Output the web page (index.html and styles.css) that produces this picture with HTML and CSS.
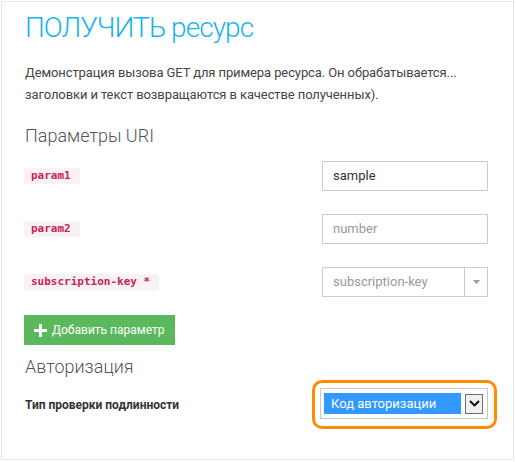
FILE: index.html
```html
<!DOCTYPE html>
<html lang="ru">
<head>
<meta charset="utf-8">
<link rel="stylesheet" href="styles.css">
</head>
<body>
<div class="frame">
  <h1 class="title">ПОЛУЧИТЬ ресурс</h1>
  <p class="desc">Демонстрация вызова GET для примера ресурса. Он обрабатывается...<br>заголовки и текст возвращаются в качестве полученных).</p>
  <h2 class="section">Параметры URI</h2>
  <div class="params">
    <div class="row">
      <code class="name">param1</code>
      <div class="field">sample</div>
    </div>
    <div class="row">
      <code class="name">param2</code>
      <div class="field placeholder">number</div>
    </div>
    <div class="row">
      <code class="name">subscription-key *</code>
      <div class="field combo">
        <span class="combo-text placeholder">subscription-key</span>
        <span class="combo-btn"><svg width="7" height="4" viewBox="0 0 7 4"><path d="M0 0h7L3.5 4z" fill="#999"/></svg></span>
      </div>
    </div>
  </div>
  <button class="add"><svg class="plus" width="13" height="13" viewBox="0 0 13 13"><path d="M5 0h3v5h5v3H8v5H5V8H0V5h5z" fill="#fff"/></svg><span>Добавить параметр</span></button>
  <h2 class="section auth-title">Авторизация</h2>
  <div class="auth-row">
    <span class="auth-label">Тип проверки подлинности</span>
    <div class="highlight">
      <div class="native-select">
        <span class="option">Код авторизации</span>
        <span class="drop"><svg width="11" height="7" viewBox="0 0 11 7"><path d="M1 1l4.5 4.5L10 1" fill="none" stroke="#000" stroke-width="1.8"/></svg></span>
      </div>
    </div>
  </div>
</div>
</body>
</html>
```
FILE: styles.css
```css
* { box-sizing: border-box; }
html, body { margin: 0; padding: 0; background: #fff; }
body { font-family: Roboto, "Open Sans", sans-serif; color: #444; }
.frame {
  margin: 1px 0 0 1px;
  width: 513px;
  height: 459px;
  border: 1px solid #e6e6e6;
  padding: 6px 25px 0 23px;
}
.title {
  margin: 0;
  font-size: 28px;
  line-height: 40px;
  font-weight: 300;
  letter-spacing: -0.95px;
  color: #1ab4ea;
}
.desc {
  margin: 14px 0 0;
  font-size: 13px;
  line-height: 22px;
  letter-spacing: -0.1px;
  color: #444;
}
.section {
  margin: 17px 0 0;
  font-size: 18px;
  line-height: 26px;
  font-weight: 300;
  color: #555;
}
.params {
  margin-top: 12px;
  display: flex;
  flex-direction: column;
  gap: 23px;
}
.row {
  display: flex;
  justify-content: space-between;
  align-items: center;
  height: 30px;
}
.name {
  font-family: "DejaVu Sans Mono", "Liberation Mono", monospace;
  font-size: 11px;
  font-weight: 700;
  line-height: 16px;
  padding: 0 9px 0 7px;
  background: #f9f2f4;
  color: #c7254e;
  margin-left: -1px;
}
.field {
  width: 166px;
  height: 30px;
  border: 1px solid #ccc;
  padding: 0 10px;
  font-size: 13px;
  line-height: 28px;
  color: #333;
}
.placeholder { color: #999; }
.combo {
  display: flex;
  padding: 0;
}
.combo-text { flex: 1; padding-left: 10px; }
.combo-btn {
  width: 23px;
  border-left: 1px solid #ccc;
  display: flex;
  align-items: center;
  justify-content: center;
}
.add {
  margin: 18px 0 0 -1px;
  height: 30px;
  width: 151px;
  border: 0;
  background: #5cb85c;
  color: #fff;
  font-family: inherit;
  font-size: 12px;
  white-space: nowrap;
  display: flex;
  align-items: center;
  gap: 5px;
  padding: 0 0 0 10px;
}
.auth-title { margin-top: 9px; }
.auth-row {
  display: flex;
  justify-content: space-between;
  align-items: center;
}
.auth-label {
  font-size: 12px;
  font-weight: 700;
  color: #333;
}
.highlight {
  margin-right: -9px;
  width: 185px;
  height: 49px;
  border: 3px solid #ff8c00;
  border-radius: 10px;
  padding: 5px 5px 0 5px;
}
.native-select {
  width: 168px;
  height: 31px;
  border: 1px solid #c8c8c8;
  display: flex;
  align-items: center;
  padding: 0 4px 0 3px;
  gap: 4px;
}
.option {
  flex: 1;
  height: 21px;
  background: #3399ff;
  color: #fff;
  font-size: 13px;
  line-height: 21px;
  padding-left: 7px;
}
.drop {
  width: 18px;
  height: 20px;
  border: 1px solid #707070;
  background: #f0f0f0;
  display: flex;
  align-items: center;
  justify-content: center;
}
```
